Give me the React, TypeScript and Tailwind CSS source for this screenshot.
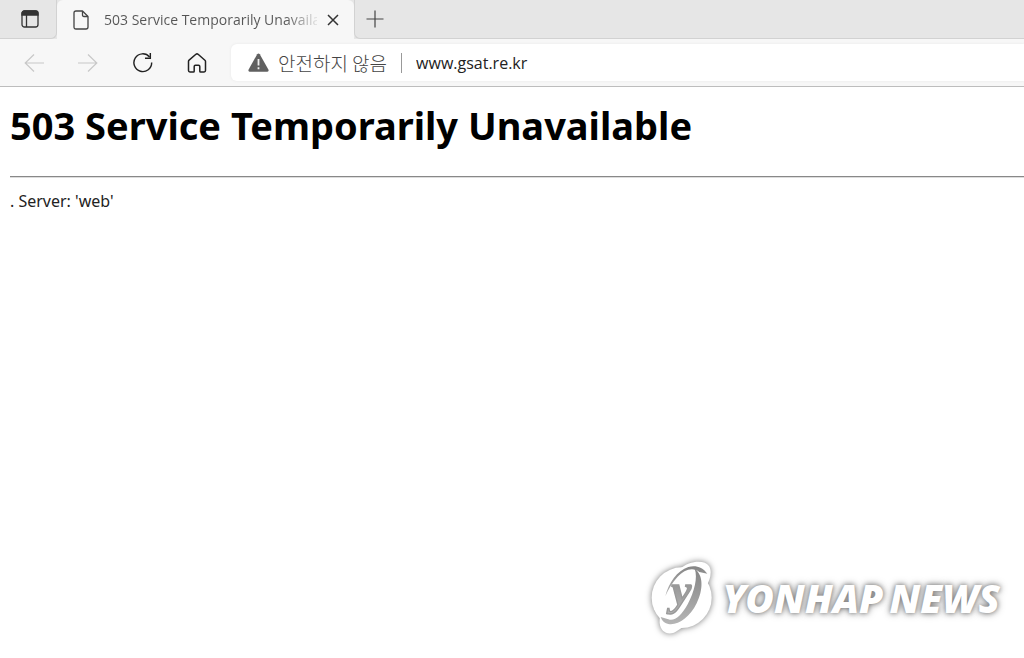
import { useState } from "react";

const titleFont = "font-['Open_Sans','Noto_Sans_CJK_KR',sans-serif]";
const bodyFont = "font-['Noto_Sans','Noto_Sans_CJK_KR',sans-serif]";

function TabStrip() {
  return (
    <div className="flex h-[39px] items-stretch bg-[#e6e6e6]">
      <div className="flex w-[57px] items-center justify-center rounded-br-md border-r border-b border-[#d2d2d2]">
        <button aria-label="Tab actions" className="pl-1">
          <svg width="18" height="18" viewBox="0 0 18 18" fill="none" stroke="#333" strokeWidth="1.3">
            <rect x="1" y="1" width="16" height="16" rx="2.5" />
            <path d="M1 3.5Q1 1 3.5 1H14.5Q17 1 17 3.5V5H1Z" fill="#333" />
            <path d="M5.5 5V17" />
          </svg>
        </button>
      </div>

      <div className="flex w-[297px] items-center rounded-t-md bg-[#f7f7f7] pl-4">
        <svg width="16" height="20" viewBox="0 0 16 20" fill="none" stroke="#444" strokeWidth="1.3" strokeLinejoin="round">
          <path d="M3 1H9.5L15 6.5V17Q15 19 13 19H3Q1 19 1 17V3Q1 1 3 1Z" />
          <path d="M9.5 1V5Q9.5 6.5 11 6.5H15" />
        </svg>
        <span className="ml-[15px] w-[213px] overflow-hidden bg-linear-to-r from-[#555] from-85% to-[#55555520] bg-clip-text text-sm whitespace-nowrap text-transparent">
          503 Service Temporarily Unavailable
        </span>
        <button aria-label="Close tab" className="ml-[10px]">
          <svg width="12" height="12" viewBox="0 0 12 12" stroke="#333" strokeWidth="1.5">
            <path d="M1 1L11 11M11 1L1 11" />
          </svg>
        </button>
      </div>

      <div className="flex grow items-center rounded-bl-md border-b border-l border-[#d2d2d2] pl-[11px]">
        <button aria-label="New tab">
          <svg width="18" height="18" viewBox="0 0 18 18" stroke="#444" strokeWidth="1.2">
            <path d="M9 0.5V17.5M0.5 9H17.5" />
          </svg>
        </button>
      </div>
    </div>
  );
}

function Toolbar() {
  const [url, setUrl] = useState("www.gsat.re.kr");

  return (
    <div className="flex h-12 items-center border-b border-[#bdbdbd] bg-[#f7f7f7] pl-6">
      <div className="flex shrink-0 items-center gap-[34px]">
        <button aria-label="Back" disabled>
          <svg width="20" height="20" viewBox="0 0 20 20" fill="none" stroke="#c8c8c8" strokeWidth="1.2">
            <path d="M20 10H1M10 1.5L1.2 10L10 18.5" />
          </svg>
        </button>
        <button aria-label="Forward" disabled>
          <svg width="20" height="20" viewBox="0 0 20 20" fill="none" stroke="#c8c8c8" strokeWidth="1.2">
            <path d="M0 10H19M10 1.5L18.8 10L10 18.5" />
          </svg>
        </button>
        <button aria-label="Refresh">
          <svg width="21" height="21" viewBox="0 0 22 22" fill="none" stroke="#222" strokeWidth="1.5">
            <path d="M20.6 11A9.3 9.3 0 1 1 18.4 5.2" />
            <path d="M19.2 1V6.6H13.6" />
          </svg>
        </button>
        <button aria-label="Home">
          <svg width="20" height="20" viewBox="0 0 20 20" fill="none" stroke="#222" strokeWidth="1.5" strokeLinejoin="round">
            <path d="M1.5 8.4Q1.5 7.7 2.1 7.2L8.9 1.3Q10 .4 11.1 1.3L17.9 7.2Q18.5 7.7 18.5 8.4V17.6Q18.5 19 17.1 19H13.6Q12.8 19 12.8 18.2V13.4Q12.8 12.2 11.6 12.2H8.4Q7.2 12.2 7.2 13.4V18.2Q7.2 19 6.4 19H2.9Q1.5 19 1.5 17.6Z" />
          </svg>
        </button>
      </div>

      <div className="ml-6 flex h-[37px] grow items-center rounded-l-md bg-white pl-[17px] shadow-[0_0_3px_#e8e8e8]">
        <svg width="21" height="19" viewBox="0 0 21 19">
          <path d="M9.2 1.2Q10.5 -.4 11.8 1.2L20.5 16.8Q21 18.7 19.4 18.7H1.6Q0 18.7 .5 16.8Z" fill="#606060" />
          <path d="M10.5 6V12.5M10.5 14.2V16.2" stroke="#eee" strokeWidth="1.8" />
        </svg>
        <span className="ml-[9px] shrink-0 font-['Noto_Sans_CJK_KR',sans-serif] text-[19px] leading-6 font-light text-[#444]">
          안전하지 않음
        </span>
        <span className="mr-[14px] ml-[14px] h-5 w-px bg-[#999]" />
        <input
          aria-label="Address"
          value={url}
          onChange={(e) => setUrl(e.target.value)}
          className="min-w-0 grow bg-transparent text-base text-[#222] outline-none"
        />
      </div>
    </div>
  );
}

function Watermark() {
  return (
    <div className="absolute right-6 bottom-5 flex items-center">
      <svg width="78" height="82" viewBox="15 15 234 246" className="drop-shadow-[0_0_3px_#777]">
        <defs>
          <linearGradient id="orbit" x1="0" y1="0" x2="0" y2="1">
            <stop offset="0" stopColor="#858585" />
            <stop offset="1" stopColor="#b5b5b5" />
          </linearGradient>
        </defs>
        <ellipse cx="125" cy="140" rx="90" ry="91" fill="#fff" />
        <path d="M118 55C150 27 195 27 207 45C217 61 212 86 195 112C175 174 139 230 102 245C80 253 62 241 59 217C57 200 66 177 75 160Z" fill="#fff" />
        <path d="M76 136C85 97 112 58 145 48C165 42 187 47 202 68L178 63C158 46 132 57 113 77C96 95 84 117 76 136Z" fill="url(#orbit)" />
        <path d="M164 53C191 72 190 116 170 157C149 200 114 224 85 219C72 216 66 209 62 198L85 205C103 212 124 195 143 160C163 121 174 80 164 53Z" fill="url(#orbit)" />
        <text
          x="94"
          y="163"
          fontFamily="Liberation Serif, serif"
          fontStyle="italic"
          fontWeight="bold"
          fontSize="136"
          fill="url(#orbit)"
          stroke="#999"
          strokeWidth="4"
        >
          y
        </text>
      </svg>
      <p className="flex gap-[6px] font-['Noto_Sans',sans-serif] text-[39px] leading-none font-black text-white italic [text-shadow:0_0_5px_#777,0_0_8px_#aaa]">
        <span>YONHAP</span>
        <span>NEWS</span>
      </p>
    </div>
  );
}

export default function App() {
  return (
    <div className={`relative flex min-h-screen flex-col bg-white ${titleFont}`}>
      <header>
        <TabStrip />
        <Toolbar />
      </header>
      <main className={`grow pt-[10px] pl-[10px] text-black ${bodyFont}`}>
        <h1 className="text-[38px] leading-[56px] font-bold whitespace-nowrap">503 Service Temporarily Unavailable</h1>
        <hr className="mt-[23px] border-t border-b border-t-[#888] border-b-[#ddd]" />
        <p className="mt-[11px] text-base text-[#222]">. Server: 'web'</p>
      </main>
      <Watermark />
    </div>
  );
}
